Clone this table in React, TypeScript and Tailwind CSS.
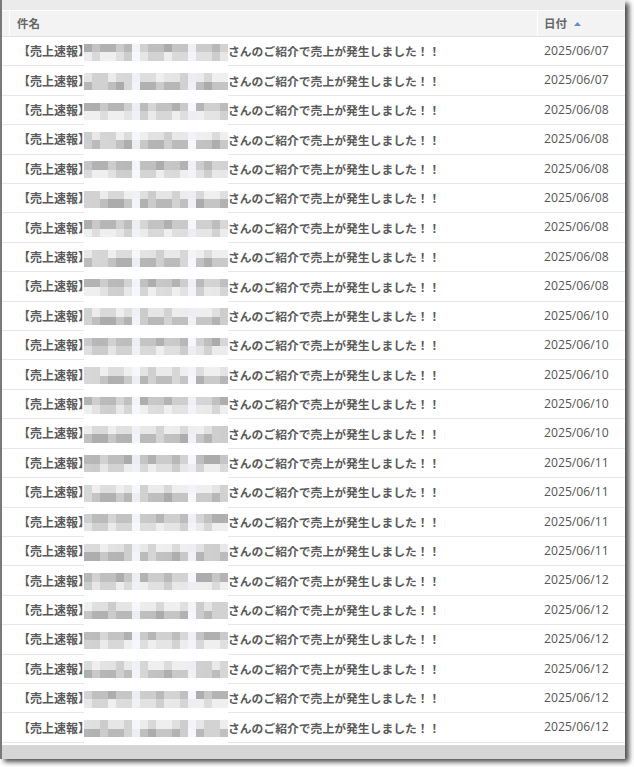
const dates = [
  "2025/06/07", "2025/06/07",
  "2025/06/08", "2025/06/08", "2025/06/08", "2025/06/08", "2025/06/08", "2025/06/08", "2025/06/08",
  "2025/06/10", "2025/06/10", "2025/06/10", "2025/06/10", "2025/06/10",
  "2025/06/11", "2025/06/11", "2025/06/11", "2025/06/11",
  "2025/06/12", "2025/06/12", "2025/06/12", "2025/06/12", "2025/06/12", "2025/06/12",
];

// blurred name: 18 columns x 2 rows of grey blocks
function shade(row: number, line: number, col: number) {
  if (col === 6 || col === 13) {
    const v = 240 + ((row * 7 + line * 5 + col) % 4) * 3;
    return `rgb(${v - 4},${v - 2},${v + 2})`;
  }
  const n = (row * 131 + line * 71 + col * 37 + ((row + col) % 3) * 19) % 97;
  const base = (line + row) % 2 === 0 ? 172 : 205;
  const v = Math.min(240, base + Math.floor((n / 97) * 45));
  return `rgb(${v},${v - 1},${v})`;
}

function Mosaic({ row }: { row: number }) {
  return (
    <div className="self-start h-[calc(100%+1px)] w-[144px] -ml-[6px] bg-white flex items-center relative">
      <div className="grid grid-cols-[repeat(18,8px)] grid-rows-[8.5px_8.5px] mt-px">
        {[0, 1].map((line) =>
          Array.from({ length: 18 }).map((_, col) => (
            <div key={`${line}-${col}`} style={{ background: shade(row, line, col) }} />
          ))
        )}
      </div>
    </div>
  );
}

export default function App() {
  return (
    <div className="w-[634px] h-[767px] bg-white overflow-hidden">
      <div className="w-[625px] h-[759px] border-l-2 border-[#7a7a7a] bg-white shadow-[4px_3px_5px_rgba(0,0,0,0.7)] flex flex-col">
        {/* top band */}
        <div className="h-[11px] bg-[#ebebeb] border-b border-white" />

        {/* header */}
        <div className="h-[26px] flex bg-[#f3f3f3] border-b border-[#e2e2e2] text-[11.5px] font-bold text-[#666] font-['Noto_Sans_CJK_JP',sans-serif]">
          <div className="w-[8px] border-r border-white" />
          <div className="flex-1 flex items-center pl-[7px] border-r border-white">件名</div>
          <div className="w-[87px] flex items-center pl-[6px] gap-[7px]">
            日付
            <svg width="7" height="4" viewBox="0 0 7 4">
              <path d="M0 4 L3.5 0 L7 4 Z" fill="#5b8fd6" />
            </svg>
          </div>
        </div>

        {/* rows */}
        <div className="flex flex-col">
          {dates.map((d, i) => (
            <div key={i} className="h-[29.42px] flex items-center border-b border-[#e6e6e6]">
              <div className="w-[16px]" />
              <span className="text-[12px] font-bold text-[#5a5a5a] font-['Noto_Sans_CJK_JP',sans-serif] whitespace-nowrap">
                【売上速報】
              </span>
              <Mosaic row={i} />
              <span className="text-[11.8px] font-bold text-[#5a5a5a] font-['Noto_Sans_CJK_JP',sans-serif] whitespace-nowrap">
                さんのご紹介で売上が発生しました！！
              </span>
              <div className="flex-1" />
              <div className="w-[88px] pl-[7px] text-[12.2px] text-[#555] font-['Open_Sans',sans-serif]">{d}</div>
            </div>
          ))}
        </div>

        <div className="h-[2px] bg-white" />
        <div className="flex-1 bg-[#d6d6d6]" />
      </div>
    </div>
  );
}
